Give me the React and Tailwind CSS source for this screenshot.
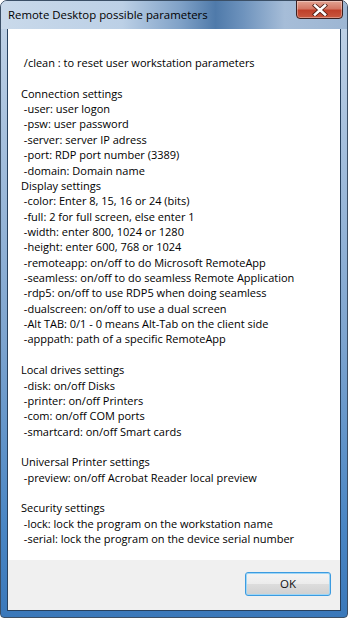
const lines = [
  { t: " /clean : to reset user workstation parameters" },
  { t: "" },
  { t: "Connection settings" },
  { t: " -user: user logon" },
  { t: " -psw: user password" },
  { t: " -server: server IP adress" },
  { t: " -port: RDP port number (3389)" },
  { t: " -domain: Domain name" },
  { t: "Display settings" },
  { t: " -color: Enter 8, 15, 16 or 24 (bits)" },
  { t: " -full: 2 for full screen, else enter 1" },
  { t: " -width: enter 800, 1024 or 1280" },
  { t: " -height: enter 600, 768 or 1024" },
  { t: " -remoteapp: on/off to do Microsoft RemoteApp" },
  { t: " -seamless: on/off to do seamless Remote Application" },
  { t: " -rdp5: on/off to use RDP5 when doing seamless" },
  { t: " -dualscreen: on/off to use a dual screen" },
  { t: " -Alt TAB: 0/1 - 0 means Alt-Tab on the client side" },
  { t: " -apppath: path of a specific RemoteApp" },
  { t: "" },
  { t: "Local drives settings" },
  { t: " -disk: on/off Disks" },
  { t: " -printer: on/off Printers" },
  { t: " -com: on/off COM ports" },
  { t: " -smartcard: on/off Smart cards" },
  { t: "" },
  { t: "Universal Printer settings" },
  { t: " -preview: on/off Acrobat Reader local preview" },
  { t: "" },
  { t: "Security settings" },
  { t: " -lock: lock the program on the workstation name" },
  { t: " -serial: lock the program on the device serial number" },
];

export default function App() {
  return (
    <div className="w-[348px] h-[618px] bg-white font-['Open_Sans',sans-serif] text-[11px] text-black">
      {/* window frame */}
      <div className="relative flex h-full w-full flex-col rounded-t-[7px] rounded-b-[4px] border border-[#3b4f66] bg-[linear-gradient(180deg,#c4d5e8_0%,#a9c2de_20%,#7da4cf_55%,#4a86c4_85%,#3a78ba_100%)] px-[6px] pb-[6px]">
        {/* title bar glass */}
        <div className="pointer-events-none absolute inset-x-0 top-0 h-[28px] rounded-t-[6px] bg-[linear-gradient(90deg,#c9d9ea_0%,#bcd0e6_35%,#7fa1c7_52%,#4f7aaa_62%,#6e93bd_70%,#a6bdd8_82%,#9db6d3_100%)]" />

        <div className="relative flex h-[27px] items-start justify-between">
          <span className="pl-[1px] pt-[7px] text-[11.4px] leading-[14px] text-black">
            Remote Desktop possible parameters
          </span>
          <button
            type="button"
            className="-mt-[1px] mr-[-2px] flex h-[19px] w-[47px] items-center justify-center rounded-b-[4px] border border-[#3b2020] bg-[linear-gradient(180deg,#e3a392_0%,#d47764_45%,#c0402a_55%,#c9583f_100%)] shadow-[inset_0_0_0_1px_rgba(255,255,255,0.35)]"
          >
            <svg width="16" height="12" viewBox="0 0 16 12">
              <path
                d="M3 1.5 L13 10.5 M13 1.5 L3 10.5"
                stroke="#4a1a12"
                strokeWidth="4.2"
                strokeLinecap="square"
              />
              <path
                d="M3 1.5 L13 10.5 M13 1.5 L3 10.5"
                stroke="#ffffff"
                strokeWidth="2.6"
                strokeLinecap="square"
              />
            </svg>
          </button>
        </div>

        {/* client area */}
        <div className="flex flex-1 flex-col border border-[#27415f] bg-white">
          <div className="flex-1 pl-[13px] pt-[26px] text-[11px] leading-[15.37px]">
            {lines.map((l, i) => (
              <div key={i} className="h-[15.37px] whitespace-pre">
                {l.t}
              </div>
            ))}
          </div>
          <div className="flex h-[50px] items-start justify-end bg-[#f0f0f0] pr-[9px] pt-[12px]">
            <button
              type="button"
              className="h-[24px] w-[86px] rounded-[3px] border border-[#3c9be0] bg-[linear-gradient(180deg,#f4f4f4_0%,#ececec_48%,#dcdcdc_52%,#d0d0d0_100%)] text-[11.5px] text-[#111] shadow-[inset_0_0_0_1px_#9ed6f6]"
            >
              OK
            </button>
          </div>
        </div>
      </div>
    </div>
  );
}
